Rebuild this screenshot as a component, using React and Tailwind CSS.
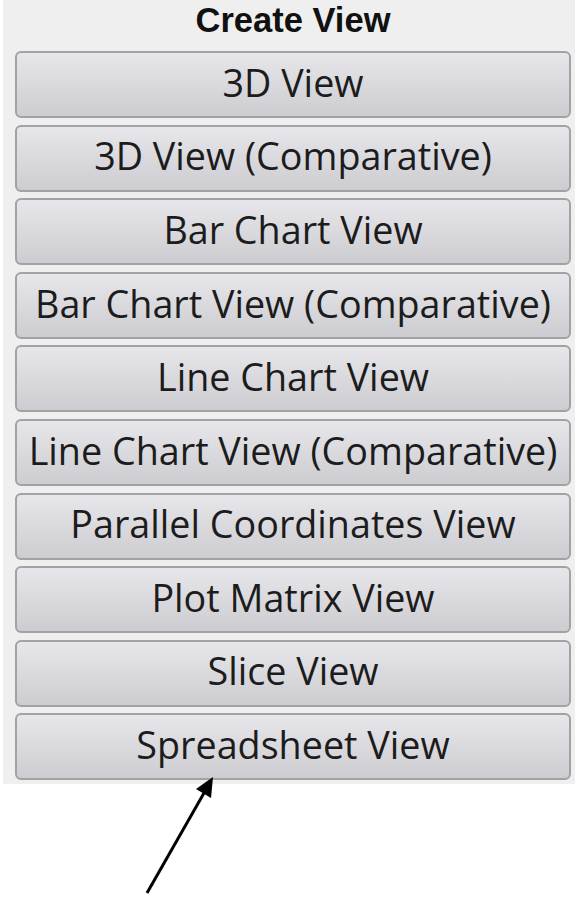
import React from "react";

const items = [
  "3D View",
  "3D View (Comparative)",
  "Bar Chart View",
  "Bar Chart View (Comparative)",
  "Line Chart View",
  "Line Chart View (Comparative)",
  "Parallel Coordinates View",
  "Plot Matrix View",
  "Slice View",
  "Spreadsheet View",
];

export default function App() {
  return (
    <div className="relative w-[578px] h-[900px] bg-white overflow-hidden">
      <div className="ml-[3px] w-[572px] bg-[#efefef] pl-[12px] pr-[4px] pb-[4px] flex flex-col">
        <div className="h-[44px] leading-[40px] text-center text-[34.5px] font-bold text-[#111] [font-family:'Liberation_Sans',Arial,sans-serif] mb-[7px]">
          Create View
        </div>
        <div className="flex flex-col gap-[6.6px]">
          {items.map((t) => (
            <button
              key={t}
              className="h-[67px] w-full flex items-center justify-center pb-[3px] rounded-[6px] border-2 border-[#a2a2a4] bg-gradient-to-b from-[#e7e7eb] to-[#cdcdd1] text-[37.7px] text-[#1c1c1c] whitespace-nowrap [font-family:'Open_Sans',sans-serif]"
            >
              {t}
            </button>
          ))}
        </div>
      </div>
      <svg
        className="absolute left-0 top-0 pointer-events-none"
        width="578"
        height="900"
        viewBox="0 0 578 900"
      >
        <line x1="147" y1="893" x2="204" y2="793" stroke="#000" strokeWidth="3" />
        <polygon points="213,777 196,789 211,798" fill="#000" />
      </svg>
    </div>
  );
}
